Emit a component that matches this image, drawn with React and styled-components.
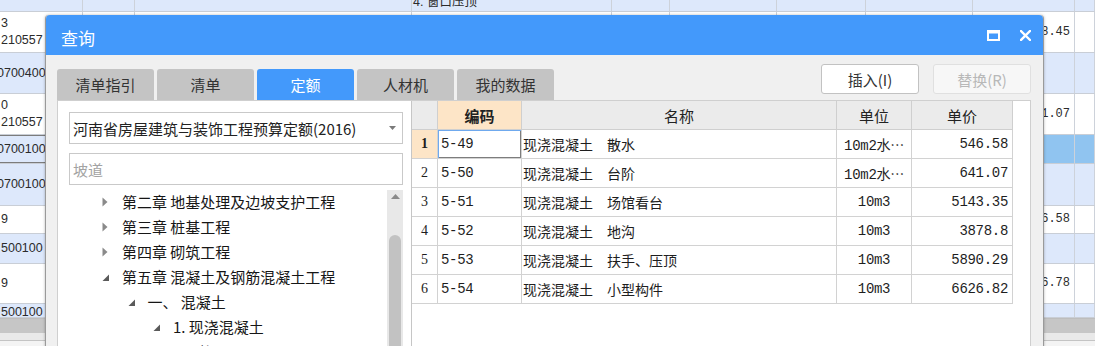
import React from 'react';
import styled, { createGlobalStyle } from 'styled-components';

const GlobalStyle = createGlobalStyle`
  html, body { margin: 0; padding: 0; background: #fff; overflow: hidden; }
  body { font-family: "Noto Sans CJK SC", "Liberation Sans", sans-serif; }
  * { box-sizing: border-box; }
`;

const Page = styled.div`
  position: relative;
  width: 1095px;
  height: 346px;
  overflow: hidden;
  background: #fff;
`;

/* ---------- background spreadsheet ---------- */
const Sheet = styled.div`
  display: flex;
  flex-direction: column;
`;

const toneBg = { white: '#ffffff', blue: '#dde8fb', sel: '#90c4f0' };

const SheetRow = styled.div`
  display: grid;
  grid-template-columns: 83px 52px 277px 200px 58px 107px 89px 107px 102px 1fr;
  height: ${(p) => p.$h}px;
  border-bottom: 1px solid #c9ced6;
  background: ${(p) => toneBg[p.$tone]};
  overflow: hidden;
`;

const SheetCell = styled.div`
  border-right: 1px solid #cdd2da;
  overflow: hidden;
  display: flex;
  flex-direction: column;
  justify-content: ${(p) => (p.$top ? 'flex-start' : 'center')};
  align-items: ${(p) => (p.$right ? 'flex-end' : 'flex-start')};
  padding: ${(p) => (p.$right ? '0 4px 0 0' : '0 0 0 1px')};
  font-family: ${(p) => (p.$mono ? '"Liberation Mono", monospace' : '"Liberation Sans", "Noto Sans CJK SC", sans-serif')};
  font-size: ${(p) => (p.$mono ? '12px' : '12.5px')};
  line-height: 17px;
  color: #2b2b2b;
  white-space: nowrap;
  background: ${(p) => (p.$lead ? '#dde8fb' : 'transparent')};
  box-shadow: ${(p) => (p.$mark ? 'inset 0 1px 0 #7c7c7c, inset 0 -1px 0 #7c7c7c' : 'none')};
`;

const SheetText = styled.span`
  display: block;
  margin-left: ${(p) => (p.$cut ? '-4px' : '0')};
  margin-top: ${(p) => (p.$lift ? '-6px' : '0')};
`;

const HScroll = styled.div`
  height: 22px;
  background: #e9e9e9;
  border-top: 1px solid #bdbdbd;
  display: flex;
  flex-direction: column;
`;

const HThumb = styled.div`
  height: 14px;
  background: #c6c6c6;
`;

const SheetFoot = styled.div`
  height: 8px;
  border-top: 1px solid #c4c4c4;
  background: #f4f4f4;
`;

/* ---------- dialog ---------- */
const Dialog = styled.div`
  position: absolute;
  left: 45px;
  top: 15px;
  width: 999px;
  height: 345px;
  display: flex;
  flex-direction: column;
  background: #f0f0f0;
  border-left: 1px solid #9a9a9a;
  border-right: 1px solid #9a9a9a;
  border-radius: 4px 4px 0 0;
  box-shadow: 0 0 3px rgba(0, 0, 0, 0.28);
`;

const TitleBar = styled.div`
  height: 40px;
  flex: none;
  display: flex;
  align-items: center;
  padding: 0 12px 0 15px;
  background: #4399fb;
  border-radius: 4px 4px 0 0;
  color: #fff;
`;

const Title = styled.div`
  flex: 1;
  font-size: 17px;
  margin-top: 4px;
`;

const TitleControls = styled.div`
  display: flex;
  align-items: center;
  gap: 20px;
`;

const TitleIcon = styled.svg`
  display: block;
`;

const Body = styled.div`
  flex: 1;
  min-height: 0;
  display: flex;
  flex-direction: column;
  padding: 9px 12px 0 11px;
`;

const TopRow = styled.div`
  height: 36px;
  flex: none;
  display: flex;
  justify-content: space-between;
`;

const Tabs = styled.div`
  display: flex;
  align-self: flex-end;
  gap: 3px;
`;

const Tab = styled.div`
  width: 97px;
  height: 31px;
  display: flex;
  align-items: center;
  justify-content: center;
  border-radius: 3px 3px 0 0;
  background: ${(p) => (p.$active ? '#4399fb' : '#c4c4c4')};
  color: ${(p) => (p.$active ? '#ffffff' : '#333333')};
  font-size: 15px;
`;

const Actions = styled.div`
  display: flex;
  gap: 14px;
  align-self: flex-start;
`;

const ActionButton = styled.div`
  width: 98px;
  height: 30px;
  display: flex;
  align-items: center;
  justify-content: center;
  border-radius: 3px;
  border: 1px solid ${(p) => (p.$disabled ? '#e0e0e0' : '#c2c2c2')};
  background: ${(p) => (p.$disabled ? '#f7f7f7' : '#ffffff')};
  color: ${(p) => (p.$disabled ? '#b8b8b8' : '#333333')};
  font-size: 15px;
`;

const Content = styled.div`
  flex: 1;
  min-height: 0;
  display: flex;
  border: 1px solid #cfcfcf;
  background: #fff;
`;

const LeftPanel = styled.div`
  width: 354px;
  flex: none;
  border-right: 1px solid #c6c6c6;
  padding: 11px 8px 0 11px;
  display: flex;
  flex-direction: column;
  gap: 9px;
`;

const Combo = styled.div`
  height: 32px;
  flex: none;
  display: flex;
  align-items: center;
  justify-content: space-between;
  border: 1px solid #c9c9c9;
  padding: 0 6px 0 3px;
  font-size: 15px;
  color: #222;
`;

const SearchInput = styled.input`
  height: 32px;
  flex: none;
  border: 1px solid #c9c9c9;
  padding: 0 3px;
  font-family: "Noto Sans CJK SC", sans-serif;
  font-size: 15px;
  color: #222;
  outline: none;
  &::placeholder { color: #a3a3a3; }
`;

const TreeArea = styled.div`
  flex: 1;
  min-height: 0;
  display: flex;
  margin-top: -4px;
`;

const TreeList = styled.div`
  flex: 1;
  overflow: hidden;
  margin-top: -1px;
`;

const TreeRow = styled.div`
  height: 25px;
  display: flex;
  align-items: center;
  padding-left: ${(p) => 33 + 25.5 * (p.$level - 1)}px;
  font-size: 15px;
  color: #161616;
  white-space: nowrap;
`;

const TreeToggle = styled.span`
  width: 20px;
  flex: none;
  display: flex;
  align-items: center;
`;

const VScroll = styled.div`
  width: 16px;
  flex: none;
  background: #e8e8e8;
  display: flex;
  flex-direction: column;
  align-items: center;
  padding-top: 4px;
`;

const VThumb = styled.div`
  width: 12px;
  flex: 1;
  margin-top: 36px;
  background: #c2c2c2;
  border-radius: 6px 6px 0 0;
`;

const RightPanel = styled.div`
  flex: 1;
  min-width: 0;
  background: #fff;
`;

const Grid = styled.div`
  display: grid;
  grid-template-columns: 26px 84px 315px 75px 101px;
  width: 601px;
`;

const HeadCell = styled.div`
  height: 29px;
  display: flex;
  align-items: center;
  justify-content: center;
  background: ${(p) => (p.$hot ? '#fde5c7' : '#ebebeb')};
  border-right: 1px solid #cfcfcf;
  border-bottom: 1px solid #cfcfcf;
  font-size: 15px;
  font-weight: ${(p) => (p.$hot ? 700 : 400)};
  color: #222;
`;

const Cell = styled.div`
  height: 29px;
  display: flex;
  align-items: center;
  justify-content: ${(p) => p.$justify || 'flex-start'};
  padding: 0 ${(p) => (p.$justify === 'flex-end' ? '4px' : p.$tight ? '1px' : '3px')};
  border-right: 1px solid #d2d2d2;
  border-bottom: 1px solid #d2d2d2;
  background: ${(p) => (p.$hot ? '#fde5c7' : '#ffffff')};
  font-family: ${(p) =>
    p.$serif
      ? '"Liberation Serif", serif'
      : p.$mono
      ? '"Liberation Mono", "Noto Sans CJK SC", monospace'
      : '"Noto Sans CJK SC", sans-serif'};
  font-size: 14px;
  letter-spacing: ${(p) => (p.$mono ? '-0.3px' : '0')};
  font-weight: ${(p) => (p.$hot ? 700 : 400)};
  color: #1e1e1e;
  white-space: pre;
  box-shadow: ${(p) => (p.$current ? 'inset 1px 1px 0 #6fa9ee, inset -1px -1px 0 #7d7d7d' : 'none')};
`;

/* ---------- data ---------- */
const sheetRows = [
  { h: 12, tone: 'blue', cells: { 3: { lines: ['4. 窗口压顶'], lift: true } } },
  { h: 41, tone: 'white', cells: { 0: { lines: ['3', '210557'] }, 2: { lines: ['    现浇混凝土 散水、坡道 混凝土种类', ''] }, 8: { lines: ['5368.45'], right: true } } },
  { h: 41, tone: 'blue', cells: { 0: { lines: ['0700400'], cut: true } } },
  { h: 41, tone: 'white', cells: { 0: { lines: ['0', '210557'] }, 8: { lines: ['4641.07'], right: true } } },
  { h: 29, tone: 'sel', cells: { 0: { lines: ['0700100'], cut: true } } },
  { h: 42, tone: 'blue', cells: { 0: { lines: ['0700100'], cut: true } } },
  { h: 28, tone: 'white', cells: { 0: { lines: ['9'] }, 8: { lines: ['3546.58'], right: true } } },
  { h: 30, tone: 'blue', cells: { 0: { lines: ['500100'] } } },
  { h: 40, tone: 'white', cells: { 0: { lines: ['9'] }, 8: { lines: ['6626.78'], right: true } } },
  { h: 14, tone: 'blue', top: true, cells: { 0: { lines: ['500100'] } } },
];

const tabs = ['清单指引', '清单', '定额', '人材机', '我的数据'];

const treeItems = [
  { level: 1, state: 'closed', text: '第二章 地基处理及边坡支护工程' },
  { level: 1, state: 'closed', text: '第三章 桩基工程' },
  { level: 1, state: 'closed', text: '第四章 砌筑工程' },
  { level: 1, state: 'open', text: '第五章 混凝土及钢筋混凝土工程' },
  { level: 2, state: 'open', text: '一、 混凝土' },
  { level: 3, state: 'open', text: '1. 现浇混凝土' },
  { level: 4, state: 'leaf', text: '垫层' },
];

const quotaRows = [
  { n: '1', code: '5-49', name: '现浇混凝土　散水', unit: '10m2水⋯', price: '546.58' },
  { n: '2', code: '5-50', name: '现浇混凝土　台阶', unit: '10m2水⋯', price: '641.07' },
  { n: '3', code: '5-51', name: '现浇混凝土　场馆看台', unit: '10m3', price: '5143.35' },
  { n: '4', code: '5-52', name: '现浇混凝土　地沟', unit: '10m3', price: '3878.8' },
  { n: '5', code: '5-53', name: '现浇混凝土　扶手、压顶', unit: '10m3', price: '5890.29' },
  { n: '6', code: '5-54', name: '现浇混凝土　小型构件', unit: '10m3', price: '6626.82' },
];

function Toggle({ state }) {
  if (state === 'closed') {
    return (
      <svg width="6" height="10" viewBox="0 0 6 10">
        <polygon points="0.5,0.5 5.5,5 0.5,9.5" fill="#8a8a8a" />
      </svg>
    );
  }
  if (state === 'open') {
    return (
      <svg width="8" height="8" viewBox="0 0 8 8" style={{ marginTop: 3 }}>
        <polygon points="7,0.5 7,7 0.5,7" fill="#5a5a5a" />
      </svg>
    );
  }
  return null;
}

export default function App() {
  return (
    <>
      <GlobalStyle />
      <Page>
        <Sheet>
          {sheetRows.map((row, ri) => (
            <SheetRow key={ri} $h={row.h} $tone={row.tone}>
              {Array.from({ length: 10 }).map((_, ci) => {
                const c = row.cells[ci];
                return (
                  <SheetCell
                    key={ci}
                    $right={c && c.right}
                    $mono={c && c.right}
                    $top={row.top || (c && c.lift)}
                    $lead={row.tone === 'sel' && ci === 0}
                    $mark={row.tone === 'sel' && ci === 0}
                  >
                    {c &&
                      c.lines.map((t, li) => (
                        <SheetText key={li} $cut={c.cut} $lift={c.lift}>
                          {t}
                        </SheetText>
                      ))}
                  </SheetCell>
                );
              })}
            </SheetRow>
          ))}
          <HScroll>
            <HThumb />
          </HScroll>
          <SheetFoot />
        </Sheet>

        <Dialog>
          <TitleBar>
            <Title>查询</Title>
            <TitleControls>
              <TitleIcon width="13" height="11" viewBox="0 0 13 11">
                <rect x="1" y="1.5" width="11" height="8.5" fill="none" stroke="#fff" strokeWidth="2" />
                <rect x="0" y="0" width="13" height="3.5" fill="#fff" />
              </TitleIcon>
              <TitleIcon width="11" height="11" viewBox="0 0 11 11">
                <path d="M1 1 L10 10 M10 1 L1 10" stroke="#fff" strokeWidth="2.4" strokeLinecap="square" />
              </TitleIcon>
            </TitleControls>
          </TitleBar>

          <Body>
            <TopRow>
              <Tabs>
                {tabs.map((t) => (
                  <Tab key={t} $active={t === '定额'}>
                    {t}
                  </Tab>
                ))}
              </Tabs>
              <Actions>
                <ActionButton>插入(I)</ActionButton>
                <ActionButton $disabled>替换(R)</ActionButton>
              </Actions>
            </TopRow>

            <Content>
              <LeftPanel>
                <Combo>
                  <span>河南省房屋建筑与装饰工程预算定额(2016)</span>
                  <svg width="7" height="4" viewBox="0 0 7 4">
                    <polygon points="0,0 7,0 3.5,4" fill="#7a7a7a" />
                  </svg>
                </Combo>
                <SearchInput placeholder="坡道" readOnly />
                <TreeArea>
                  <TreeList>
                    {treeItems.map((it, i) => (
                      <TreeRow key={i} $level={it.level}>
                        <TreeToggle>
                          <Toggle state={it.state} />
                        </TreeToggle>
                        {it.text}
                      </TreeRow>
                    ))}
                  </TreeList>
                  <VScroll>
                    <svg width="9" height="5" viewBox="0 0 9 5">
                      <polygon points="0,5 9,5 4.5,0" fill="#8a8a8a" />
                    </svg>
                    <VThumb />
                  </VScroll>
                </TreeArea>
              </LeftPanel>

              <RightPanel>
                <Grid>
                  <HeadCell />
                  <HeadCell $hot>编码</HeadCell>
                  <HeadCell>名称</HeadCell>
                  <HeadCell>单位</HeadCell>
                  <HeadCell>单价</HeadCell>
                  {quotaRows.map((r, i) => (
                    <React.Fragment key={r.n}>
                      <Cell $serif $justify="center" $hot={i === 0}>
                        {r.n}
                      </Cell>
                      <Cell $mono $current={i === 0}>
                        {r.code}
                      </Cell>
                      <Cell $tight>{r.name}</Cell>
                      <Cell $mono $justify="center">
                        {r.unit}
                      </Cell>
                      <Cell $mono $justify="flex-end">
                        {r.price}
                      </Cell>
                    </React.Fragment>
                  ))}
                </Grid>
              </RightPanel>
            </Content>
          </Body>
        </Dialog>
      </Page>
    </>
  );
}
